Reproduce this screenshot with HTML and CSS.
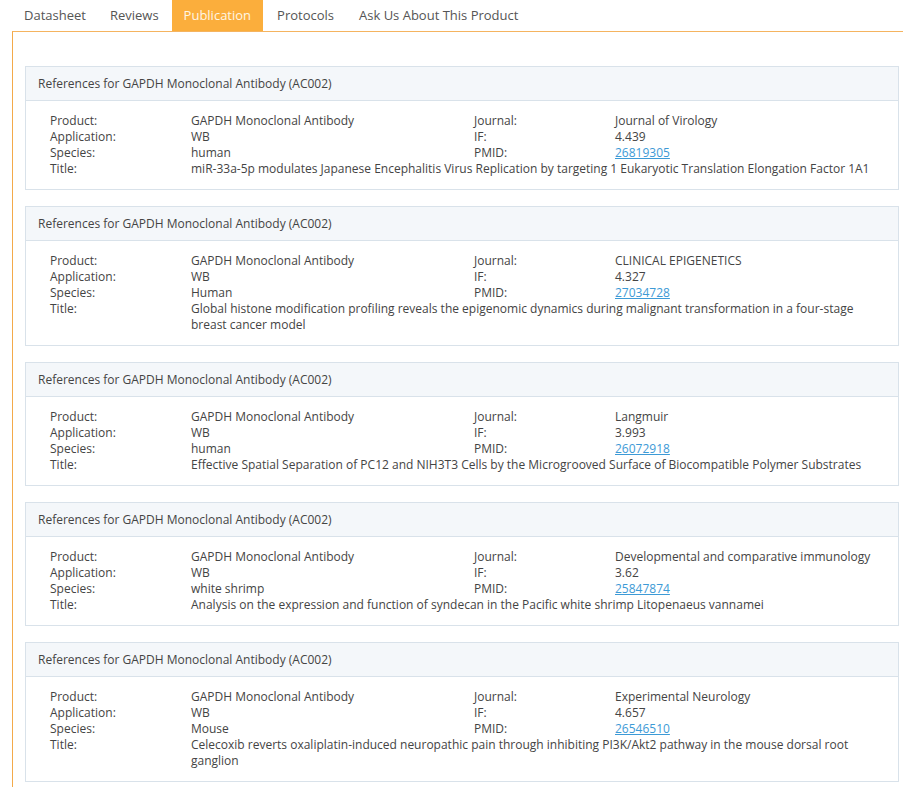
FILE: index.html
```html
<!DOCTYPE html>
<html lang="en">
<head>
<meta charset="utf-8">
<title>Publication</title>
<link rel="stylesheet" href="styles.css">
</head>
<body>
<div class="tabs-wrap">
  <ul class="tabs">
    <li class="tab tab-first">Datasheet</li>
    <li class="tab tab-wide">Reviews</li>
    <li class="tab active">Publication</li>
    <li class="tab tab-wider">Protocols</li>
    <li class="tab">Ask Us About This Product</li>
  </ul>
  <div class="panel">
    <div class="card">
      <div class="card-head">References for GAPDH Monoclonal Antibody (AC002)</div>
      <div class="card-body">
        <span class="lbl">Product:</span><span class="val">GAPDH Monoclonal Antibody</span>
        <span class="lbl">Journal:</span><span class="val">Journal of Virology</span>
        <span class="lbl">Application:</span><span class="val">WB</span>
        <span class="lbl">IF:</span><span class="val">4.439</span>
        <span class="lbl">Species:</span><span class="val">human</span>
        <span class="lbl">PMID:</span><span class="val"><a href="#">26819305</a></span>
        <span class="lbl">Title:</span><span class="val wide">miR-33a-5p modulates Japanese Encephalitis Virus Replication by targeting 1 Eukaryotic Translation Elongation Factor 1A1</span>
      </div>
    </div>
    <div class="card">
      <div class="card-head">References for GAPDH Monoclonal Antibody (AC002)</div>
      <div class="card-body">
        <span class="lbl">Product:</span><span class="val">GAPDH Monoclonal Antibody</span>
        <span class="lbl">Journal:</span><span class="val">CLINICAL EPIGENETICS</span>
        <span class="lbl">Application:</span><span class="val">WB</span>
        <span class="lbl">IF:</span><span class="val">4.327</span>
        <span class="lbl">Species:</span><span class="val">Human</span>
        <span class="lbl">PMID:</span><span class="val"><a href="#">27034728</a></span>
        <span class="lbl">Title:</span><span class="val wide">Global histone modification profiling reveals the epigenomic dynamics during malignant transformation in a four-stage breast cancer model</span>
      </div>
    </div>
    <div class="card">
      <div class="card-head">References for GAPDH Monoclonal Antibody (AC002)</div>
      <div class="card-body">
        <span class="lbl">Product:</span><span class="val">GAPDH Monoclonal Antibody</span>
        <span class="lbl">Journal:</span><span class="val">Langmuir</span>
        <span class="lbl">Application:</span><span class="val">WB</span>
        <span class="lbl">IF:</span><span class="val">3.993</span>
        <span class="lbl">Species:</span><span class="val">human</span>
        <span class="lbl">PMID:</span><span class="val"><a href="#">26072918</a></span>
        <span class="lbl">Title:</span><span class="val wide">Effective Spatial Separation of PC12 and NIH3T3 Cells by the Microgrooved Surface of Biocompatible Polymer Substrates</span>
      </div>
    </div>
    <div class="card">
      <div class="card-head">References for GAPDH Monoclonal Antibody (AC002)</div>
      <div class="card-body">
        <span class="lbl">Product:</span><span class="val">GAPDH Monoclonal Antibody</span>
        <span class="lbl">Journal:</span><span class="val">Developmental and comparative immunology</span>
        <span class="lbl">Application:</span><span class="val">WB</span>
        <span class="lbl">IF:</span><span class="val">3.62</span>
        <span class="lbl">Species:</span><span class="val">white shrimp</span>
        <span class="lbl">PMID:</span><span class="val"><a href="#">25847874</a></span>
        <span class="lbl">Title:</span><span class="val wide">Analysis on the expression and function of syndecan in the Pacific white shrimp Litopenaeus vannamei</span>
      </div>
    </div>
    <div class="card">
      <div class="card-head">References for GAPDH Monoclonal Antibody (AC002)</div>
      <div class="card-body">
        <span class="lbl">Product:</span><span class="val">GAPDH Monoclonal Antibody</span>
        <span class="lbl">Journal:</span><span class="val">Experimental Neurology</span>
        <span class="lbl">Application:</span><span class="val">WB</span>
        <span class="lbl">IF:</span><span class="val">4.657</span>
        <span class="lbl">Species:</span><span class="val">Mouse</span>
        <span class="lbl">PMID:</span><span class="val"><a href="#">26546510</a></span>
        <span class="lbl">Title:</span><span class="val wide">Celecoxib reverts oxaliplatin-induced neuropathic pain through inhibiting PI3K/Akt2 pathway in the mouse dorsal root ganglion</span>
      </div>
    </div>
  </div>
</div>
</body>
</html>
```

FILE: styles.css
```css
html, body {
  margin: 0;
  padding: 0;
  background: #ffffff;
}

body {
  font-family: "Open Sans", "Liberation Sans", sans-serif;
  color: #444;
  overflow: hidden;
}

.tabs-wrap {
  padding-left: 12px;
}

.tabs {
  list-style: none;
  margin: 0;
  padding: 0;
  display: flex;
  width: 516px;
  border-bottom: 1px solid #f3aa4a;
}

.tab {
  height: 31px;
  line-height: 30px;
  font-size: 13px;
  color: #555;
  padding: 0 12px;
  white-space: nowrap;
}

.tab-first {
  padding: 0 11px 0 12px;
}

.tab-wide {
  padding: 0 13px;
}

.tab-wider {
  padding: 0 13px 0 14px;
}

.tab.active {
  background: #fbae3c;
  color: #fff6e4;
}

.panel {
  border-top: 1px solid #f5b460;
  border-left: 1px solid #f3aa4a;
  margin-top: -1px;
  padding: 34px 0 8px 12px;
}

.card {
  width: 872px;
  border: 1px solid #d9e2ea;
  margin-bottom: 16px;
}

.card-head {
  height: 33px;
  line-height: 33px;
  background: #f4f7fa;
  border-bottom: 1px solid #d9e2ea;
  padding: 0 12px;
  font-size: 12px;
  color: #444;
}

.card-body {
  display: grid;
  grid-template-columns: 141px 283px 141px 1fr;
  padding: 12px 24px 12px 24px;
  font-size: 12px;
  line-height: 16px;
  color: #444;
}

.lbl, .val {
  display: block;
}

.val.wide {
  grid-column: 2 / 5;
}

.val a {
  color: #3d9ad6;
  text-decoration: underline;
}
```
